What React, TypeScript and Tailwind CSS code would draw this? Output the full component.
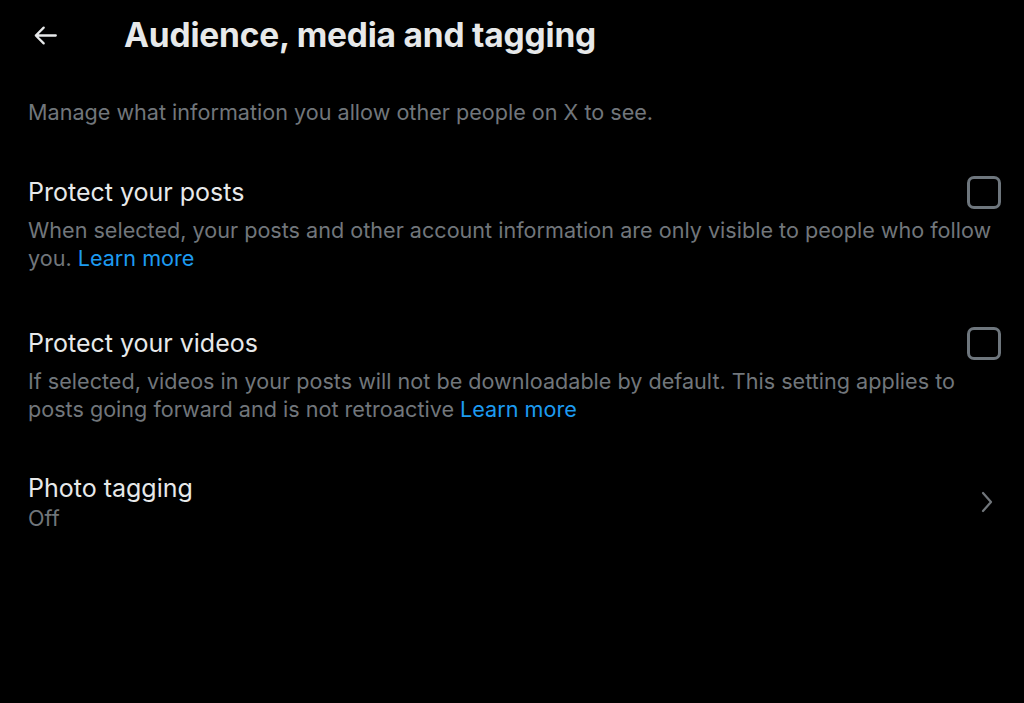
import React from "react"

const ArrowLeft = () => (
  <svg viewBox="0 0 24 24" className="w-[29px] h-[29px]" fill="none" stroke="#e7e9ea" strokeWidth={1.9} strokeLinecap="round" strokeLinejoin="round">
    <path d="M20.5 12H4M10.5 5.5L4 12l6.5 6.5" />
  </svg>
)

const Chevron = () => (
  <svg viewBox="0 0 12 22" className="w-[12px] h-[22px]" fill="none" stroke="#71767b" strokeWidth={2.2} strokeLinecap="round" strokeLinejoin="round">
    <path d="M2 2l8 9-8 9" />
  </svg>
)

const Checkbox = () => (
  <div className="w-[34px] h-[33px] shrink-0 rounded-[7px] border-[3px] border-[#6e767d]" />
)

type RowProps = {
  title: string
  text: React.ReactNode
}

const CheckRow: React.FC<RowProps> = ({ title, text }) => (
  <div className="pl-[28px] pr-[23px]">
    <div className="flex items-start justify-between">
      <div className="text-[25px] leading-[34px] text-[#e7e9ea]">{title}</div>
      <div className="pt-[1px]">
        <Checkbox />
      </div>
    </div>
    <div className="text-[21.6px] leading-[28px] text-[#71767b] mt-[7px]">{text}</div>
  </div>
)

const App: React.FC = () => {
  return (
    <div className="w-[1024px] h-[703px] bg-black overflow-hidden" style={{ fontFamily: "Inter, 'Noto Sans', sans-serif" }}>
      <div className="flex items-center h-[70px] pl-[31px]">
        <ArrowLeft />
        <h1 className="ml-[64px] text-[33.5px] font-bold text-[#e7e9ea] tracking-[-0.2px]">Audience, media and tagging</h1>
      </div>

      <p className="pl-[28px] mt-[28px] text-[21.6px] leading-[28px] text-[#71767b]">
        Manage what information you allow other people on X to see.
      </p>

      <div className="mt-[49px]">
        <CheckRow
          title="Protect your posts"
          text={
            <>
              When selected, your posts and other account information are only visible to people who follow you.{" "}
              <span className="text-[#1d9bf0]">Learn more</span>
            </>
          }
        />
      </div>

      <div className="mt-[54px]">
        <CheckRow
          title="Protect your videos"
          text={
            <>
              If selected, videos in your posts will not be downloadable by default. This setting applies to posts going forward and is not retroactive{" "}
              <span className="text-[#1d9bf0]">Learn more</span>
            </>
          }
        />
      </div>

      <div className="mt-[49px] flex items-center pl-[28px] pr-[31px]">
        <div className="flex-1">
          <div className="text-[25px] leading-[32px] text-[#e7e9ea]">Photo tagging</div>
          <div className="text-[21.6px] leading-[28px] text-[#71767b]">Off</div>
        </div>
        <Chevron />
      </div>
    </div>
  )
}

export default App
